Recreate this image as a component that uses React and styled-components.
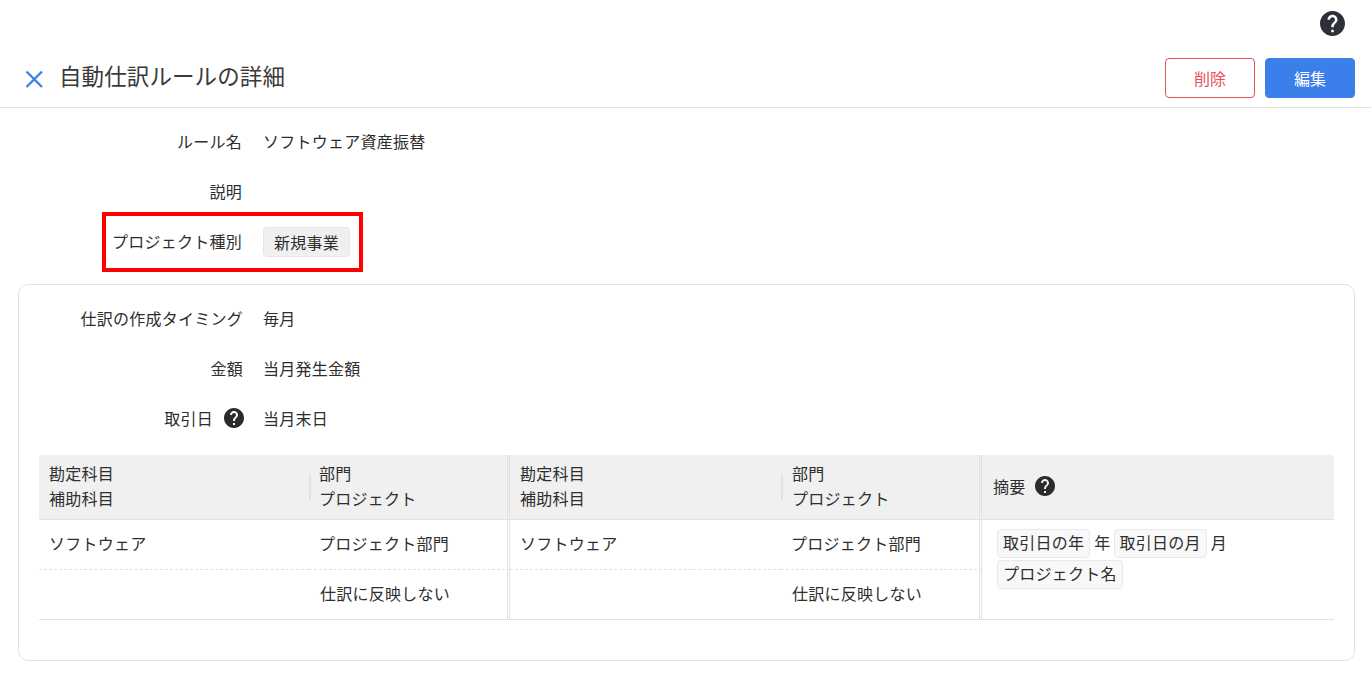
import styled, { createGlobalStyle } from 'styled-components';

const GlobalStyle = createGlobalStyle`
  html, body {
    margin: 0;
    padding: 0;
    background: #fff;
  }
  body {
    font-family: "Noto Sans CJK JP", "Noto Sans", sans-serif;
    font-size: 16px;
    letter-spacing: 0.25px;
    color: #2e2e2e;
  }
  * {
    box-sizing: border-box;
  }
`;

const Page = styled.div`
  width: 1371px;
  height: 679px;
  overflow: hidden;
`;

const TopBar = styled.div`
  display: flex;
  justify-content: flex-end;
  height: 48px;
  padding: 11px 26px 0 0;
`;

const Header = styled.header`
  display: flex;
  align-items: center;
  height: 60px;
  padding: 0 16px 0 24px;
  border-bottom: 1px solid #e2e2e2;
`;

const CloseButton = styled.button`
  display: flex;
  width: 20px;
  height: 20px;
  padding: 0;
  margin: 3px 15px 0 0;
  background: none;
  border: none;
`;

const Title = styled.h1`
  flex: 1;
  margin: 0 0 5px;
  font-size: 22.5px;
  font-weight: 400;
  letter-spacing: 0.1px;
  line-height: 32px;
  color: #3a3a3a;
`;

const Actions = styled.div`
  display: flex;
  gap: 10px;
  margin-top: 1px;
`;

const Button = styled.button`
  width: 90px;
  height: 40px;
  border-radius: 4px;
  border: 1px solid ${(props) => (props.$danger ? '#e8505b' : '#3b7feb')};
  background: ${(props) => (props.$danger ? '#fff' : '#3b7feb')};
  color: ${(props) => (props.$danger ? '#e8505b' : '#fff')};
  font: inherit;
  letter-spacing: 0;
`;

const Summary = styled.section`
  padding-top: 8px;
`;

const Row = styled.div`
  position: relative;
  display: flex;
  align-items: center;
  gap: ${(props) => (props.$inCard ? '20px' : '21px')};
  height: 50px;
`;

const Label = styled.div`
  display: flex;
  align-items: center;
  justify-content: flex-end;
  gap: 11px;
  width: ${(props) => (props.$inCard ? '204px' : '242px')};
  white-space: nowrap;
`;

const LabelHelp = styled.span`
  display: block;
  margin-right: -1px;
`;

const Tag = styled.span`
  display: inline-flex;
  align-items: center;
  height: 30px;
  margin-top: 1px;
  padding: 0 10px;
  border: 1px solid #e6e6e6;
  border-radius: 4px;
  background: #f0f0f0;
  white-space: nowrap;
`;

const Highlight = styled.div`
  position: absolute;
  left: 102px;
  top: -4px;
  width: 261px;
  height: 60px;
  border: 4px solid #ff0000;
  pointer-events: none;
`;

const Card = styled.section`
  height: 377px;
  margin: 18px 16px 0 18px;
  padding: 8px 20px 0;
  border: 1px solid #e2e2e2;
  border-radius: 10px;
`;

const Table = styled.div`
  display: grid;
  grid-template-columns: 270px 201px 271px 201px 1fr;
  margin-top: 12px;
  border-bottom: 1px solid #e2e2e2;
`;

const HeadCell = styled.div`
  position: relative;
  display: flex;
  flex-direction: column;
  justify-content: center;
  height: 65px;
  padding: 0 0 2px ${(props) => props.$pad || '10px'};
  background: #f0f0f0;
  border-bottom: 1px solid #e2e2e2;
  border-right: ${(props) => (props.$end ? '3px double #e2e2e2' : 'none')};
  line-height: 25px;
  white-space: nowrap;
  ${(props) => props.$first && 'border-top-left-radius: 4px;'}
  ${(props) => props.$last && 'border-top-right-radius: 4px;'}
`;

const Divider = styled.span`
  position: absolute;
  left: 0;
  top: 19px;
  width: 2px;
  height: 26px;
  background: #e2e2e2;
`;

const InlineHead = styled.div`
  display: flex;
  align-items: center;
  gap: 9px;
`;

const BodyCell = styled.div`
  display: flex;
  align-items: center;
  height: ${(props) => (props.$dashed ? '50px' : '49px')};
  padding: 0 0 4px ${(props) => props.$pad || '10px'};
  border-bottom: ${(props) => (props.$dashed ? '1px dashed #e2e2e2' : 'none')};
  border-right: ${(props) => (props.$end ? '3px double #e2e2e2' : 'none')};
  white-space: nowrap;
`;

const SummaryCell = styled.div`
  grid-column: 5;
  grid-row: 2 / span 2;
  display: flex;
  flex-wrap: wrap;
  align-content: flex-start;
  align-items: center;
  gap: 1px 0;
  padding: 9px 20px 0 15px;
`;

const Token = styled.span`
  display: inline-flex;
  align-items: center;
  height: 29px;
  padding: 0 5px 4px;
  border: 1px solid #e9e9e9;
  border-radius: 4px;
  background: #f8f8f8;
  white-space: nowrap;
`;

const Plain = styled.span`
  padding: 0 3px 3px 4px;
`;

const Break = styled.span`
  flex-basis: 100%;
  height: 0;
`;

const HelpIcon = ({ size = 20, color = '#2b2b2b' }) => (
  <svg width={size} height={size} viewBox="2 2 20 20" style={{ flex: 'none', display: 'block' }}>
    <path
      fill={color}
      d="M12 2C6.48 2 2 6.48 2 12s4.48 10 10 10 10-4.48 10-10S17.52 2 12 2zm1 17h-2v-2h2v2zm2.07-7.75l-.9.92C13.45 12.9 13 13.5 13 15h-2v-.5c0-1.1.45-2.1 1.17-2.83l1.24-1.26c.37-.36.59-.86.59-1.41 0-1.1-.9-2-2-2s-2 .9-2 2H8c0-2.21 1.79-4 4-4s4 1.79 4 4c0 .88-.36 1.68-.93 2.25z"
    />
  </svg>
);

const App = () => (
  <Page>
    <GlobalStyle />
    <TopBar>
      <HelpIcon size={25} color="#2d3038" />
    </TopBar>
    <Header>
      <CloseButton aria-label="close">
        <svg width="20" height="20" viewBox="0 0 20 20">
          <path d="M2.5 2.5 L18 18 M18 2.5 L2.5 18" stroke="#3b7feb" strokeWidth="2.3" fill="none" />
        </svg>
      </CloseButton>
      <Title>自動仕訳ルールの詳細</Title>
      <Actions>
        <Button $danger>削除</Button>
        <Button>編集</Button>
      </Actions>
    </Header>
    <Summary>
      <Row>
        <Label>ルール名</Label>
        <div>ソフトウェア資産振替</div>
      </Row>
      <Row>
        <Label>説明</Label>
      </Row>
      <Row>
        <Label>プロジェクト種別</Label>
        <Tag>新規事業</Tag>
        <Highlight />
      </Row>
    </Summary>
    <Card>
      <Row $inCard>
        <Label $inCard>仕訳の作成タイミング</Label>
        <div>毎月</div>
      </Row>
      <Row $inCard>
        <Label $inCard>金額</Label>
        <div>当月発生金額</div>
      </Row>
      <Row $inCard>
        <Label $inCard>
          取引日
          <LabelHelp>
            <HelpIcon />
          </LabelHelp>
        </Label>
        <div>当月末日</div>
      </Row>
      <Table>
        <HeadCell $first>
          <span>勘定科目</span>
          <span>補助科目</span>
        </HeadCell>
        <HeadCell $end>
          <Divider />
          <span>部門</span>
          <span>プロジェクト</span>
        </HeadCell>
        <HeadCell>
          <span>勘定科目</span>
          <span>補助科目</span>
        </HeadCell>
        <HeadCell $end $pad="11px">
          <Divider />
          <span>部門</span>
          <span>プロジェクト</span>
        </HeadCell>
        <HeadCell $last $pad="11px">
          <InlineHead>
            摘要
            <HelpIcon />
          </InlineHead>
        </HeadCell>

        <BodyCell $dashed>ソフトウェア</BodyCell>
        <BodyCell $dashed $end>プロジェクト部門</BodyCell>
        <BodyCell $dashed>ソフトウェア</BodyCell>
        <BodyCell $dashed $end>プロジェクト部門</BodyCell>
        <SummaryCell>
          <Token>取引日の年</Token>
          <Plain>年</Plain>
          <Token>取引日の月</Token>
          <Plain>月</Plain>
          <Break />
          <Token>プロジェクト名</Token>
        </SummaryCell>

        <BodyCell />
        <BodyCell $end $pad="11px">仕訳に反映しない</BodyCell>
        <BodyCell />
        <BodyCell $end $pad="11px">仕訳に反映しない</BodyCell>
      </Table>
    </Card>
  </Page>
);

export default App;
